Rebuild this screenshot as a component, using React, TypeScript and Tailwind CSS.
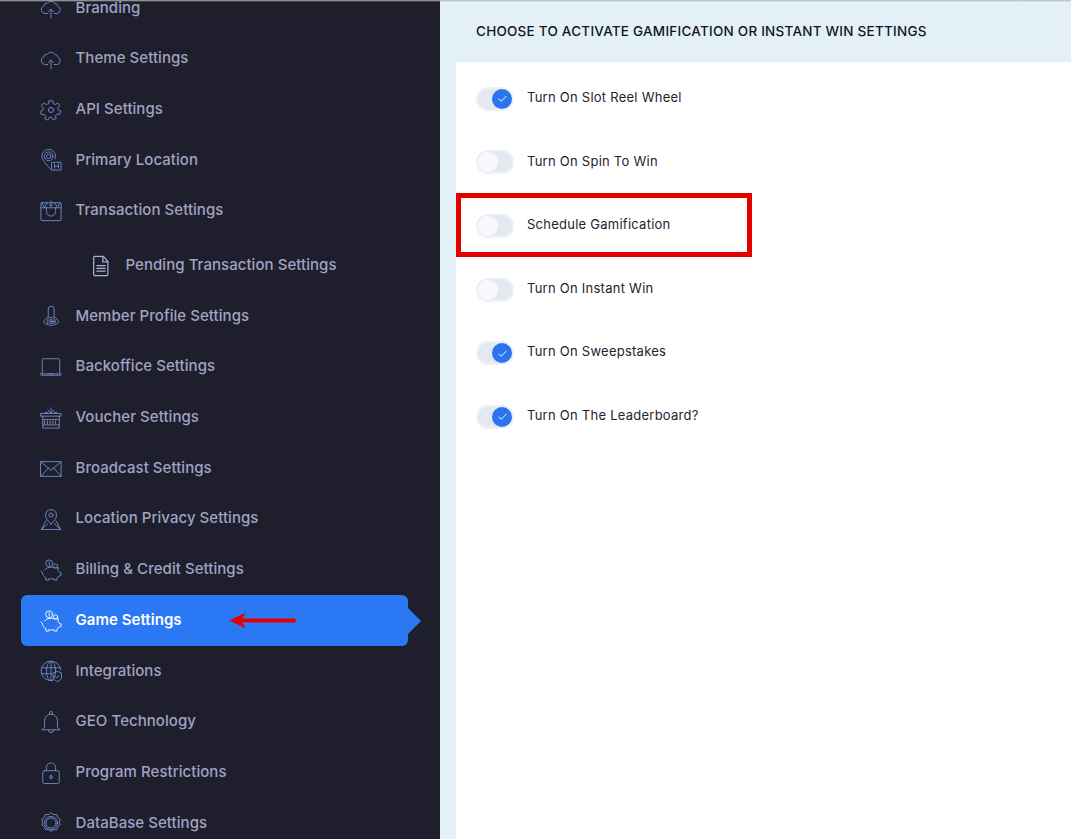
import React from "react";

type IconProps = { className?: string };

const Svg = ({ className, children }: IconProps & { children: React.ReactNode }) => (
  <svg viewBox="0 0 24 24" fill="none" stroke="currentColor" strokeWidth={1} strokeLinecap="round" strokeLinejoin="round" className={className}>
    {children}
  </svg>
);

const CloudIcon = (p: IconProps) => (
  <Svg {...p}>
    <path d="M8.500 18H5.500a4.200 4.200 0 0 1-1.400-8.100 3.600 3.600 0 0 1 4.100-3.200 4.600 4.600 0 0 1 8 .4 3.600 3.600 0 0 1 3.400 3 4.200 4.200 0 0 1-.9 7.900H15.500" />
    <path d="M12 23V13.500M9.200 16 12 13.200l2.800 2.800" />
  </Svg>
);
const GearIcon = (p: IconProps) => (
  <Svg {...p}>
    <circle cx="12" cy="12" r="2.800" />
    <path d="M10 2h4l.6 3 2.300 1 2.600-1.700 2.200 3-2.300 2 .4 2.700 2.700 1.200-1 3.600-3-.3-1.700 2 1 2.800-3.500 1.400-1.500-2.600h-2.600L8.700 23l-3.500-1.400 1-2.800-1.700-2-3 .3-1-3.600 2.700-1.200.4-2.700-2.300-2 2.200-3L7.100 6l2.300-1z" />
  </Svg>
);
const PinHIcon = (p: IconProps) => (
  <Svg {...p}>
    <path d="M11.500 22C7 17 2 12 2 8a7.500 7.500 0 0 1 15 0c0 1-.2 2-.5 3" />
    <circle cx="9.500" cy="8" r="4.800" />
    <circle cx="9.500" cy="8" r="2.400" />
    <path d="M13 14.500h10V23H13zM15.800 16.500v4.500M20.200 16.500v4.500M15.800 18.800h4.400" />
  </Svg>
);
const BagIcon = (p: IconProps) => (
  <Svg {...p}>
    <rect x="1" y="3" width="22" height="19.500" rx="1" />
    <path d="M1 8.500h22M7 8.500v4a5 5 0 0 0 10 0v-4M12 1v6M10 5l2 2.200L14 5" />
    <path d="M2 3l3 5 3-5M16 3l3 5 3-5" />
  </Svg>
);
const DocIcon = (p: IconProps) => (
  <Svg {...p}>
    <path d="M5.500 1.500h9l5 5.500v14a1.500 1.500 0 0 1-1.500 1.500H5.500A1.500 1.500 0 0 1 4 21V3a1.500 1.500 0 0 1 1.500-1.500z" strokeWidth={1.300} />
    <path d="M14 2v5.500h5.500M7.500 11.500h9M7.500 14.500h9M7.500 17.500h9" strokeWidth={1.300} />
  </Svg>
);
const MemberIcon = (p: IconProps) => (
  <Svg {...p}>
    <path d="M9 13V4.500a3.200 3.200 0 0 1 6.400 0V13" />
    <path d="M9 13c-2.500 1.500-4.500 3.500-5 5.500 1 1.500 2.500 2.500 4 3M15.400 13c2.500 1.500 4.500 3.500 5 5.500-1 1.500-2.500 2.500-4 3" />
    <circle cx="12.200" cy="18" r="4.500" />
    <circle cx="12.200" cy="18" r="2.400" />
    <circle cx="12.200" cy="18" r="0.900" />
  </Svg>
);
const LaptopIcon = (p: IconProps) => (
  <Svg {...p}>
    <path d="M2.500 19V4a1 1 0 0 1 1-1h17a1 1 0 0 1 1 1V19" />
    <path d="M.8 19.500h22.400v.5a1 1 0 0 1-1 1H1.800a1 1 0 0 1-1-1zM10 19.500h4" />
  </Svg>
);
const GiftIcon = (p: IconProps) => (
  <Svg {...p}>
    <path d="M3 10v13h18V10M1 7h22v3H1zM3 13.500h18M3 19.500h18" />
    <path d="M12 7 8.500 3M12 7l3.500-4M12 6V1M8 6H6M16 6h2" />
    <path d="M5 15v3.500M8 15v3.500M11 15v3.500M14 15v3.500M17 15v3.500" stroke="#c97a6d" />
  </Svg>
);
const MailIcon = (p: IconProps) => (
  <Svg {...p}>
    <rect x="1" y="4" width="22" height="16" />
    <path d="m1 4 11 9.500L23 4M1 20l8.500-9.500M23 20l-8.500-9.500" />
  </Svg>
);
const PrivacyIcon = (p: IconProps) => (
  <Svg {...p}>
    <path d="M12 17.500c-3.500-3.500-6-6.500-6-9.800a6 6 0 0 1 12 0c0 3.300-2.500 6.300-6 9.800z" />
    <circle cx="12" cy="7.700" r="2.200" />
    <path d="M6.500 14 1.500 23.500h21L17.500 14M1.500 23.500l7-6.500M22.500 23.500l-7-6.500" />
  </Svg>
);
const PiggyIcon = (p: IconProps) => (
  <Svg {...p}>
    <circle cx="10" cy="4.800" r="3.800" />
    <path d="M10 3v3.600" />
    <circle cx="17" cy="7.500" r="2.200" />
    <path d="M5 12c1.500-2 4-3 7-3 2 0 3 .3 4.500 1l3.500-.5-.5 3c1 .7 1.500 1.500 2 2.500h1.500v3l-3 1-1.500 2v2h-3v-1.500c-2 .5-4 .5-6 0V23H6.500v-2.500C4 19 2.500 17 2.700 14.500L1 13" />
  </Svg>
);
const GlobeIcon = (p: IconProps) => (
  <Svg {...p}>
    <path d="M14 22.400A10.700 10.700 0 1 1 22.600 11" />
    <ellipse cx="12" cy="12" rx="5" ry="10.500" />
    <path d="M1.500 8.500h21M1.500 15h11M12 1.500V22" />
    <path d="M14.500 14l4.500-1.500 4.500 1.500v4.500c0 2.500-2 4-4.500 5-2.500-1-4.500-2.500-4.500-5z" />
    <path d="m17 18 1.500 1.500 2.500-3" />
  </Svg>
);
const BellIcon = (p: IconProps) => (
  <Svg {...p}>
    <path d="M10.500 3.500V2a1.500 1.500 0 0 1 3 0v1.500" />
    <path d="M5 17V10.500a7 7 0 0 1 14 0V17c0 1 1 2.500 3 3.500H2c2-1 3-2.500 3-3.500z" />
    <path d="M9 20.500a3 3 0 0 0 6 0" />
  </Svg>
);
const LockIcon = (p: IconProps) => (
  <Svg {...p}>
    <path d="M7 9.500V6a5 5 0 0 1 10 0v3.500" />
    <rect x="3" y="9.500" width="18" height="14" rx="2" />
    <ellipse cx="12" cy="16.500" rx="1.300" ry="2" />
  </Svg>
);
const CogRingIcon = (p: IconProps) => (
  <Svg {...p}>
    <path d="m12 .8 2.800 2 3.400-.2 1 3.200 2.800 2-1 3.200 1 3.200-2.800 2-1 3.200-3.400-.2-2.800 2-2.800-2-3.400.2-1-3.200-2.800-2 1-3.200-1-3.200 2.800-2 1-3.200 3.400.2z" />
    <circle cx="12" cy="12" r="7.200" />
    <circle cx="12" cy="12" r="5.500" />
  </Svg>
);

const menu = [
  { name: "Branding", Icon: CloudIcon },
  { name: "Theme Settings", Icon: CloudIcon },
  { name: "API Settings", Icon: GearIcon },
  { name: "Primary Location", Icon: PinHIcon },
  { name: "Transaction Settings", Icon: BagIcon },
  { name: "Pending Transaction Settings", Icon: DocIcon, sub: true },
  { name: "Member Profile Settings", Icon: MemberIcon },
  { name: "Backoffice Settings", Icon: LaptopIcon },
  { name: "Voucher Settings", Icon: GiftIcon },
  { name: "Broadcast Settings", Icon: MailIcon },
  { name: "Location Privacy Settings", Icon: PrivacyIcon },
  { name: "Billing & Credit Settings", Icon: PiggyIcon },
  { name: "Game Settings", Icon: PiggyIcon, active: true },
  { name: "Integrations", Icon: GlobeIcon },
  { name: "GEO Technology", Icon: BellIcon },
  { name: "Program Restrictions", Icon: LockIcon },
  { name: "DataBase Settings", Icon: CogRingIcon },
];

const settings = [
  { label: "Turn On Slot Reel Wheel", on: true },
  { label: "Turn On Spin To Win", on: false },
  { label: "Schedule Gamification", on: false },
  { label: "Turn On Instant Win", on: false },
  { label: "Turn On Sweepstakes", on: true },
  { label: "Turn On The Leaderboard?", on: true },
];

const Toggle = ({ on }: { on: boolean }) => (
  <div className={`flex h-6 w-[38px] shrink-0 items-center rounded-full border-2 border-[#eef0f6] bg-[#e4e8f0] ${on ? "justify-end" : "justify-start"}`}>
    {on ? (
      <span className="flex h-5 w-5 items-center justify-center rounded-full bg-[#2b74ee]">
        <svg viewBox="0 0 12 12" className="h-[11px] w-[11px]" fill="none" stroke="#fff" strokeWidth={1} strokeLinecap="round" strokeLinejoin="round">
          <path d="m2 6.500 2.700 2.500L10 3.500" />
        </svg>
      </span>
    ) : (
      <span className="flex h-5 w-5 items-center justify-center rounded-full bg-[#f8f9fc]">
        <svg viewBox="0 0 12 12" className="h-2 w-2" fill="none" stroke="#eceef4" strokeWidth={1}>
          <path d="m2 2 8 8M10 2l-8 8" />
        </svg>
      </span>
    )}
  </div>
);

const App = () => {
  return (
    <div className="relative flex h-[839px] w-[1071px] overflow-hidden bg-white font-['Inter','Open_Sans',sans-serif]">
      {/* Sidebar */}
      <aside className="h-full w-[440px] shrink-0 overflow-hidden bg-[#1e1e2d] px-[21px]">
        <ul className="-mt-[17px]">
          {menu.map(({ name, Icon, sub, active }) => (
            <li
              key={name}
              className={`relative flex h-[50.7px] w-[387px] items-center gap-[14px] text-[15px] tracking-[0.05px] ${sub ? "mt-[4px] pl-[69px]" : "pl-[19px]"} ${
                active ? "rounded-md bg-[#2b78f4] font-semibold text-white" : "font-medium text-[#a0a3c2]"
              }`}
            >
              <Icon className={`h-[22px] w-[22px] shrink-0 ${sub ? "text-[#a9b4d8]" : active ? "text-white" : "text-[#6f8ccb]"}`} />
              <span className="-ml-[0.5px] -mt-px whitespace-nowrap">{name}</span>
              {active && (
                <span className="absolute left-full top-1/2 h-0 w-0 -translate-y-1/2 border-y-[13px] border-l-[13px] border-y-transparent border-l-[#2b78f4]" />
              )}
            </li>
          ))}
        </ul>
      </aside>

      {/* Main panel */}
      <main className="flex h-full flex-1 flex-col bg-[#e3f0f8] pl-4">
        <div className="flex h-[62px] shrink-0 items-center pl-5 text-[13.5px] font-medium uppercase tracking-[0.24px] text-[#14141c]">
          Choose to activate gamification or instant win settings
        </div>
        <div className="flex-1 bg-white pl-5 pt-[5px]">
          {settings.map((s) => (
            <div key={s.label} className="flex h-[63.6px] items-center gap-[13px] text-[13px] tracking-[0.25px] text-[#23232e]">
              <Toggle on={s.on} />
              <span className="-mt-[2px]">{s.label}</span>
            </div>
          ))}
        </div>
      </main>

      {/* Annotations drawn over the screenshot */}
      <div className="absolute left-[456px] top-[193px] h-[64px] w-[296px] border-[5px] border-[#e50000]" />
      <svg className="absolute left-[228px] top-[610px] h-5 w-[68px]" viewBox="0 0 68 20">
        <path d="M66 10.500H10" stroke="#e50000" strokeWidth={4} strokeLinecap="round" />
        <path d="M1.500 10.500 18 2.500l-5 8 5 8z" fill="#e50000" />
      </svg>
      <div className="absolute inset-x-0 top-0 h-[2px] bg-linear-to-b from-[#b5b5b5] to-transparent" />
    </div>
  );
};

export default App;
